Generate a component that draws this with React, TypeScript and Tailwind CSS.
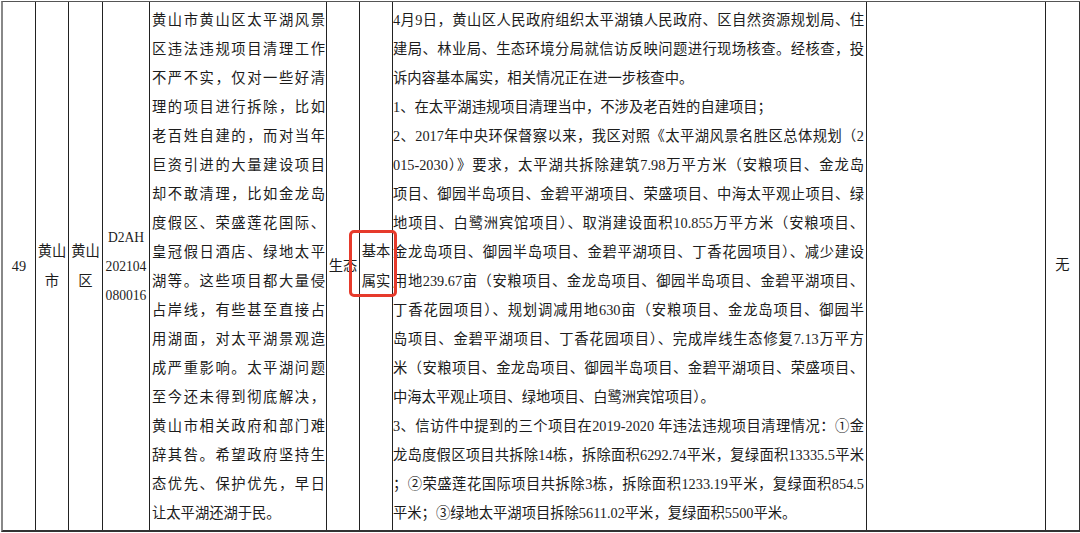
import React from "react";

const FONT = { fontFamily: '"Liberation Serif", "Noto Sans CJK SC", serif' };

type L = { t: string; last?: boolean };

const leftLines: L[] = [
  { t: "黄山市黄山区太平湖风景" },
  { t: "区违法违规项目清理工作" },
  { t: "不严不实，仅对一些好清" },
  { t: "理的项目进行拆除，比如" },
  { t: "老百姓自建的，而对当年" },
  { t: "巨资引进的大量建设项目" },
  { t: "却不敢清理，比如金龙岛" },
  { t: "度假区、荣盛莲花国际、" },
  { t: "皇冠假日酒店、绿地太平" },
  { t: "湖等。这些项目都大量侵" },
  { t: "占岸线，有些甚至直接占" },
  { t: "用湖面，对太平湖景观造" },
  { t: "成严重影响。太平湖问题" },
  { t: "至今还未得到彻底解决，" },
  { t: "黄山市相关政府和部门难" },
  { t: "辞其咎。希望政府坚持生" },
  { t: "态优先、保护优先，早日" },
  { t: "让太平湖还湖于民。", last: true },
];

const rightLines: L[] = [
  { t: "4月9日，黄山区人民政府组织太平湖镇人民政府、区自然资源规划局、住" },
  { t: "建局、林业局、生态环境分局就信访反映问题进行现场核查。经核查，投" },
  { t: "诉内容基本属实，相关情况正在进一步核查中。", last: true },
  { t: "1、在太平湖违规项目清理当中，不涉及老百姓的自建项目；", last: true },
  { t: "2、2017年中央环保督察以来，我区对照《太平湖风景名胜区总体规划（2" },
  { t: "015-2030）》要求，太平湖共拆除建筑7.98万平方米（安粮项目、金龙岛" },
  { t: "项目、御园半岛项目、金碧平湖项目、荣盛项目、中海太平观止项目、绿" },
  { t: "地项目、白鹭洲宾馆项目）、取消建设面积10.855万平方米（安粮项目、" },
  { t: "金龙岛项目、御园半岛项目、金碧平湖项目、丁香花园项目）、减少建设" },
  { t: "用地239.67亩（安粮项目、金龙岛项目、御园半岛项目、金碧平湖项目、" },
  { t: "丁香花园项目）、规划调减用地630亩（安粮项目、金龙岛项目、御园半" },
  { t: "岛项目、金碧平湖项目、丁香花园项目）、完成岸线生态修复7.13万平方" },
  { t: "米（安粮项目、金龙岛项目、御园半岛项目、金碧平湖项目、荣盛项目、" },
  { t: "中海太平观止项目、绿地项目、白鹭洲宾馆项目）。", last: true },
  { t: "3、信访件中提到的三个项目在2019-2020 年违法违规项目清理情况：①金" },
  { t: "龙岛度假区项目共拆除14栋，拆除面积6292.74平米，复绿面积13335.5平米" },
  { t: "；②荣盛莲花国际项目共拆除3栋，拆除面积1233.19平米，复绿面积854.5" },
  { t: "平米；③绿地太平湖项目拆除5611.02平米，复绿面积5500平米。", last: true },
];

function Lines({ lines }: { lines: L[] }) {
  return (
    <>
      {lines.map((l, i) =>
        l.last ? (
          <div key={i} className="text-left">
            {l.t}
          </div>
        ) : (
          <div key={i} className="text-justify [text-align-last:justify]">
            {l.t}
          </div>
        )
      )}
    </>
  );
}

function Center({ children, w }: { children: React.ReactNode; w: string }) {
  return (
    <div
      className={`${w} shrink-0 border-r border-[#222] flex items-center justify-center text-center leading-[30px]`}
    >
      <div>{children}</div>
    </div>
  );
}

export default function App() {
  return (
    <div
      className="relative w-[1080px] h-[533px] bg-white overflow-hidden text-[#1c1c1c] text-[14.3px]"
      style={FONT}
    >
      <div className="mt-[1px] ml-[1px] flex h-[531px] border-t border-t-[#555] border-b-2 border-b-[#333] border-l-2 border-l-[#888]">
        <Center w="w-[33px]">49</Center>
        <Center w="w-[33px]">
          <div>黄山</div>
          <div>市</div>
        </Center>
        <Center w="w-[34px]">
          <div>黄山</div>
          <div>区</div>
        </Center>
        <div className="w-[47px] shrink-0 border-r border-[#222] flex items-center justify-center text-center text-[13.6px] leading-[29px]">
          <div>
            <div>D2AH</div>
            <div>202104</div>
            <div>080016</div>
          </div>
        </div>
        <div className="w-[177px] shrink-0 border-r border-[#222] pl-[2px] pr-[1px] pt-[4px] leading-[29px]">
          <Lines lines={leftLines} />
        </div>
        <Center w="w-[33px]">生态</Center>
        <Center w="w-[33px]">
          <div>基本</div>
          <div>属实</div>
        </Center>
        <div className="w-[474px] shrink-0 border-r border-[#222] pl-[0px] pr-[2px] pt-[4px] leading-[29px]">
          <Lines lines={rightLines} />
        </div>
        <div className="w-[179px] shrink-0 border-r border-[#222]" />
        <div className="w-[34px] shrink-0 border-r border-[#333] flex items-center justify-center">
          无
        </div>
      </div>
      <div className="absolute left-[349px] top-[230px] w-[48px] h-[67px] border-[3px] border-[#e63a2b] rounded-[5px]" />
    </div>
  );
}
